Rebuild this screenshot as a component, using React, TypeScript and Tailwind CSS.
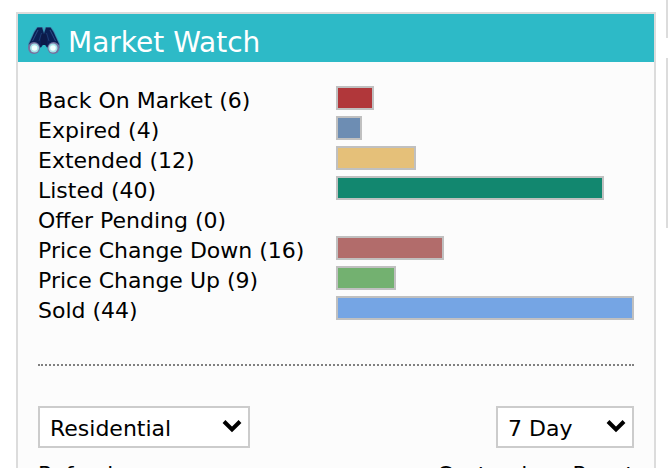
import { useState } from "react"

interface Stat {
  label: string
  count: number
  size: number
  color: string
}

// size is the share of the full track, in percent
const stats: Stat[] = [
  { label: "Back On Market", count: 6, size: 12.7, color: "bg-[#b1373a]" },
  { label: "Expired", count: 4, size: 8.7, color: "bg-[#6d8db3]" },
  { label: "Extended", count: 12, size: 26.8, color: "bg-[#e5c079]" },
  { label: "Listed", count: 40, size: 90, color: "bg-[#12876f]" },
  { label: "Offer Pending", count: 0, size: 0, color: "" },
  { label: "Price Change Down", count: 16, size: 36.2, color: "bg-[#b26c6b]" },
  { label: "Price Change Up", count: 9, size: 20.1, color: "bg-[#73b170]" },
  { label: "Sold", count: 44, size: 100, color: "bg-[#75a5e4]" },
]

function BinocularsIcon() {
  return (
    <svg viewBox="0 0 32 28" className="h-7 w-8 shrink-0" aria-hidden="true">
      <path d="M9 0h6l1 4 1-4h6l3 4 6 13v4H20l-2-3h-4l-2 3H0v-4L6 4z" fill="#4a6d9c" opacity=".6" />
      <path d="M9.500 .5h4.500l2 6v10l-3 4L.8 17.500 6.500 5z" fill="#0b2054" />
      <path d="M22.500 .5H18l-2 6v10l3 4 12.200-3L25.500 5z" fill="#0b2054" />
      <path d="M13 7h6v11h-6z" fill="#0c1a49" />
      <path d="M10 3 4.500 14M22 3l5.500 11" stroke="#2b4c86" strokeWidth="1" fill="none" />
      <path d="M13.500 6 11 14M18.500 6l2.500 8" stroke="#1d3a72" strokeWidth="1" fill="none" />
      <circle cx="6" cy="21" r="6" fill="#76719f" />
      <circle cx="25.500" cy="21" r="6" fill="#76719f" />
      <circle cx="6.500" cy="21" r="4.500" fill="#a5e3e8" />
      <circle cx="25" cy="21" r="4.500" fill="#a5e3e8" />
      <circle cx="6.500" cy="21" r="2.800" fill="#f3ffff" />
      <circle cx="25" cy="21" r="2.800" fill="#f3ffff" />
    </svg>
  )
}

interface PickerProps {
  label: string
  options: string[]
  className: string
}

function Picker({ label, options, className }: PickerProps) {
  const [value, setValue] = useState(options[0])

  return (
    <div className={`relative ${className}`}>
      <select
        aria-label={label}
        value={value}
        onChange={(e) => setValue(e.target.value)}
        className="block h-[42px] w-full appearance-none border-2 border-[#cccccc] bg-white pl-[10px] pr-8 pt-1 text-[22px] leading-[30px] text-black"
      >
        {options.map((option) => (
          <option key={option}>{option}</option>
        ))}
      </select>
      <svg viewBox="0 0 20 14" className="pointer-events-none absolute right-2 top-[13px] h-[14px] w-5" aria-hidden="true">
        <path d="M2 2.500 10 10.500 18 2.500" fill="none" stroke="#000" strokeWidth="4" />
      </svg>
    </div>
  )
}

export default function App() {
  return (
    <div className="flex h-screen gap-[10px] overflow-hidden bg-white pl-4 font-['Verdana','DejaVu_Sans',sans-serif] text-[22px] leading-[30px] text-black">
      <section className="mt-3 flex-1 self-start border-2 border-[#dcdcdc] bg-[#fcfcfc]">
        <header className="flex h-12 items-center gap-2 bg-[#2dbac7] pl-[10px] pt-[6px]">
          <BinocularsIcon />
          <h1 className="pt-1 text-[28px] leading-8 text-white">Market Watch</h1>
        </header>

        <div className="px-5 pb-5 pt-6">
          <ul>
            {stats.map((stat) => (
              <li key={stat.label} className="flex h-[30px]">
                <span className="w-1/2 whitespace-nowrap">
                  {stat.label} ({stat.count})
                </span>
                <span className="w-1/2">
                  {stat.size > 0 && (
                    <span className={`block h-6 border-2 border-[#c0c0c0] ${stat.color}`} style={{ width: `${stat.size}%` }} />
                  )}
                </span>
              </li>
            ))}
          </ul>

          <hr className="mt-[38px] border-t-2 border-dotted border-[#808080]" />

          <div className="mt-10 flex justify-between">
            <Picker label="Property type" options={["Residential"]} className="w-[212px]" />
            <Picker label="Period" options={["7 Day"]} className="w-[138px]" />
          </div>

          <div className="mt-3 flex justify-between">
            <a href="#refresh">Refresh</a>
            <div className="flex gap-5">
              <a href="#customize">Customize</a>
              <a href="#reset">Reset</a>
            </div>
          </div>
        </div>
      </section>

      {/* Edge of the next column */}
      <aside className="flex w-[2px] flex-col gap-5">
        <div className="h-[38px] bg-[#dcdcdc]" />
        <div className="h-[170px] bg-[#dcdcdc]" />
      </aside>
    </div>
  )
}
